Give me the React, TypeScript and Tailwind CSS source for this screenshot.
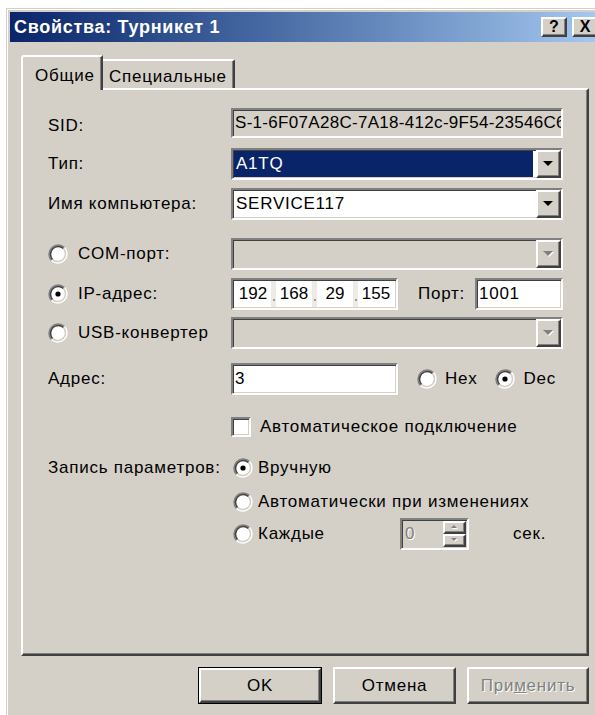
import React from 'react';

// classic 3D edges
const sunken =
  'border-2 border-t-[#808080] border-l-[#808080] border-r-white border-b-white shadow-[inset_1px_1px_0_#404040,inset_-1px_-1px_0_#d4d0c8]';
const raised =
  'border-2 border-t-white border-l-white border-r-[#404040] border-b-[#404040] shadow-[inset_-1px_-1px_0_#808080]';
const grayed = 'text-[#808080] [text-shadow:1px_1px_0_#ffffff]';

function Radio({ checked = false }: { checked?: boolean }) {
  return (
    <svg width="20" height="20" viewBox="0 0 20 20" className="shrink-0">
      <circle cx="10" cy="10" r="7.2" fill="#ffffff" />
      <path d="M3.5 16.5 A9.2 9.2 0 0 1 16.5 3.5" fill="none" stroke="#808080" strokeWidth="1.6" />
      <path d="M16.5 3.5 A9.2 9.2 0 0 1 3.5 16.5" fill="none" stroke="#ffffff" strokeWidth="1.6" />
      <path d="M4.56 15.44 A7.7 7.7 0 0 1 15.44 4.56" fill="none" stroke="#404040" strokeWidth="1.5" />
      <path d="M15.44 4.56 A7.7 7.7 0 0 1 4.56 15.44" fill="none" stroke="#d4d0c8" strokeWidth="1.5" />
      {checked && <circle cx="10" cy="10" r="2.6" fill="#000000" />}
    </svg>
  );
}

function Arrow({ disabled = false, small = false, up = false }: { disabled?: boolean; small?: boolean; up?: boolean }) {
  const w = small ? 6 : 10;
  const h = small ? 4 : 6;
  const pts = up ? `0,${h - 1} ${w / 2},0 ${w},${h - 1}` : `0,0 ${w},0 ${w / 2},${h - 1}`;
  return (
    <svg width={w + 1} height={h + 1} viewBox={`0 0 ${w + 1} ${h + 1}`}>
      {disabled && <polygon points={pts} fill="#ffffff" transform="translate(1,1)" />}
      <polygon points={pts} fill={disabled ? '#808080' : '#000000'} />
    </svg>
  );
}

function Combo({ value, selected = false, disabled = false }: { value?: string; selected?: boolean; disabled?: boolean }) {
  return (
    <div className={`${sunken} w-[332px] h-[32px] flex ${disabled ? 'bg-[#d4d0c8]' : 'bg-white'}`}>
      <div className="flex-1 flex items-center pl-[1px] pr-[3px] py-[1px]">
        {value && (
          <div className={`h-full w-full flex items-center px-[2px] ${selected ? 'bg-[#0a246a] text-white' : 'text-black'}`}>
            {value}
          </div>
        )}
      </div>
      <div className={`${raised} w-[25px] h-full bg-[#d4d0c8] flex items-center justify-center`}>
        <Arrow disabled={disabled} />
      </div>
    </div>
  );
}

function Label({ children }: { children: React.ReactNode }) {
  return <div className="w-[183px] shrink-0">{children}</div>;
}

function RadioLabel({ text, checked = false }: { text: string; checked?: boolean }) {
  return (
    <div className="w-[183px] shrink-0 flex items-center gap-[10px]">
      <Radio checked={checked} />
      <span>{text}</span>
    </div>
  );
}

const ipParts = ['192', '168', '29', '155'];

function IpField() {
  return (
    <div className={`${sunken} w-[167px] h-[32px] bg-white flex items-stretch px-[2px] py-[1px]`}>
      {ipParts.map((p, i) => (
        <React.Fragment key={p + i}>
          {i > 0 && (
            <div className="w-[5px] bg-[#ecebe6] flex items-end justify-center pb-[6px]">
              <div className="w-[2px] h-[2px] bg-[#9a9a9a]" />
            </div>
          )}
          <div className="flex-1 flex items-center justify-center tracking-normal">{p}</div>
        </React.Fragment>
      ))}
    </div>
  );
}

function Spinner() {
  return (
    <div className={`${sunken} w-[69px] h-[32px] bg-[#d4d0c8] flex items-stretch`}>
      <div className={`flex-1 flex items-center pl-[3px] ${grayed}`}>0</div>
      <div className="w-[24px] flex flex-col py-[1px] pr-[1px]">
        <div className={`${raised} flex-1 flex items-center justify-center`}>
          <Arrow disabled small up />
        </div>
        <div className={`${raised} flex-1 flex items-center justify-center`}>
          <Arrow disabled small />
        </div>
      </div>
    </div>
  );
}

function TitleButton({ glyph }: { glyph: string }) {
  return (
    <div className={`${raised} w-[26px] h-[20px] bg-[#d4d0c8] flex items-center justify-center text-[16px] font-bold leading-none tracking-normal text-black`}>
      {glyph}
    </div>
  );
}

function PushButton({ children, isDefault = false, width }: { children: React.ReactNode; isDefault?: boolean; width: string }) {
  return (
    <div className={`${width} h-[37px] ${isDefault ? 'border border-black' : ''}`}>
      <div className={`${raised} h-full bg-[#d4d0c8] flex items-center justify-center`}>{children}</div>
    </div>
  );
}

export default function App() {
  return (
    <div className="w-[595px] h-[715px] bg-white overflow-hidden font-['Liberation_Sans',Arial,sans-serif] text-[17px] tracking-[0.75px] text-black">
      <div className="ml-[6px] mt-[8px] w-[600px] h-[707px] bg-[#d4d0c8] border-t border-l border-[#d4d0c8]">
        <div className="h-full border-t border-l border-white p-[2px]">
          {/* caption */}
          <div className="h-[30px] bg-gradient-to-r from-[#0a246a] to-[#a6caf0] flex items-center justify-between pl-[4px] pr-[6px]">
            <span className="text-white font-bold text-[18px] tracking-[0.7px]">Свойства: Турникет 1</span>
            <div className="flex gap-[5px]">
              <TitleButton glyph="?" />
              <TitleButton glyph="X" />
            </div>
          </div>

          <div className="w-[568px] ml-[11px] mt-[13px]">
            {/* tabs */}
            <div className="flex items-end h-[33px]">
              <div className="relative z-10 -mb-[2px] h-[35px] w-[82px] bg-[#d4d0c8] border-t-2 border-l-2 border-white border-r-2 border-r-[#404040] shadow-[inset_-1px_0_0_#808080] rounded-tl-[3px] pl-[12px] pt-[6px]">
                Общие
              </div>
              <div className="h-[29px] w-[132px] border-t-2 border-white border-r-2 border-r-[#404040] shadow-[inset_-1px_0_0_#808080] rounded-tr-[2px] pl-[6px] pt-[3px]">
                Специальные
              </div>
            </div>

            {/* page */}
            <div className="h-[568px] border-2 border-t-white border-l-white border-r-[#404040] border-b-[#404040] shadow-[inset_-1px_-1px_0_#808080] pl-[25px] flex flex-col">
              <div className="mt-[18px] h-[30px] flex items-center">
                <Label>
                  <span className="relative top-[3px]">SID:</span>
                </Label>
                <div className={`${sunken} w-[332px] h-[30px] bg-[#d4d0c8] flex items-center pl-[2px] overflow-hidden whitespace-nowrap tracking-[0.3px]`}>
                  S-1-6F07A28C-7A18-412c-9F54-23546C6
                </div>
              </div>

              <div className="mt-[10px] h-[32px] flex items-center">
                <Label>Тип:</Label>
                <Combo value="A1TQ" selected />
              </div>

              <div className="mt-[8px] h-[32px] flex items-center">
                <Label>Имя компьютера:</Label>
                <Combo value="SERVICE117" />
              </div>

              <div className="mt-[18px] h-[32px] flex items-center">
                <RadioLabel text="COM-порт:" />
                <Combo disabled />
              </div>

              <div className="mt-[8px] h-[32px] flex items-center">
                <RadioLabel text="IP-адрес:" checked />
                <IpField />
                <span className="ml-[20px] w-[57px]">Порт:</span>
                <div className={`${sunken} w-[88px] h-[32px] bg-white flex items-center pl-[2px]`}>1001</div>
              </div>

              <div className="mt-[7px] h-[32px] flex items-center">
                <RadioLabel text="USB-конвертер" />
                <Combo disabled />
              </div>

              <div className="mt-[14px] h-[32px] flex items-center">
                <Label>Адрес:</Label>
                <div className={`${sunken} w-[167px] h-[32px] bg-white flex items-center pl-[2px]`}>3</div>
                <div className="ml-[19px] flex items-center gap-[8px]">
                  <Radio />
                  <span>Hex</span>
                </div>
                <div className="ml-[18px] flex items-center gap-[8px]">
                  <Radio checked />
                  <span>Dec</span>
                </div>
              </div>

              <div className="mt-[22px] h-[20px] flex items-center">
                <Label>{''}</Label>
                <div className={`${sunken} w-[20px] h-[20px] bg-white`} />
                <span className="ml-[9px]">Автоматическое подключение</span>
              </div>

              <div className="mt-[21px] h-[20px] flex items-center">
                <Label>Запись параметров:</Label>
                <div className="ml-[2px] flex items-center gap-[5px]">
                  <Radio checked />
                  <span>Вручную</span>
                </div>
              </div>

              <div className="mt-[14px] h-[20px] flex items-center">
                <Label>{''}</Label>
                <div className="ml-[2px] flex items-center gap-[5px]">
                  <Radio />
                  <span>Автоматически при изменениях</span>
                </div>
              </div>

              <div className="mt-[6px] h-[32px] flex items-center">
                <Label>{''}</Label>
                <div className="ml-[2px] w-[167px] flex items-center gap-[5px]">
                  <Radio />
                  <span>Каждые</span>
                </div>
                <Spinner />
                <span className="ml-[44px]">сек.</span>
              </div>
            </div>

            {/* dialog buttons */}
            <div className="mt-[11px] flex justify-end gap-[11px]">
              <PushButton width="w-[124px]" isDefault>
                OK
              </PushButton>
              <PushButton width="w-[123px]">Отмена</PushButton>
              <PushButton width="w-[122px]">
                <span className={grayed}>
                  При<span className="underline">м</span>енить
                </span>
              </PushButton>
            </div>
          </div>
        </div>
      </div>
    </div>
  );
}
